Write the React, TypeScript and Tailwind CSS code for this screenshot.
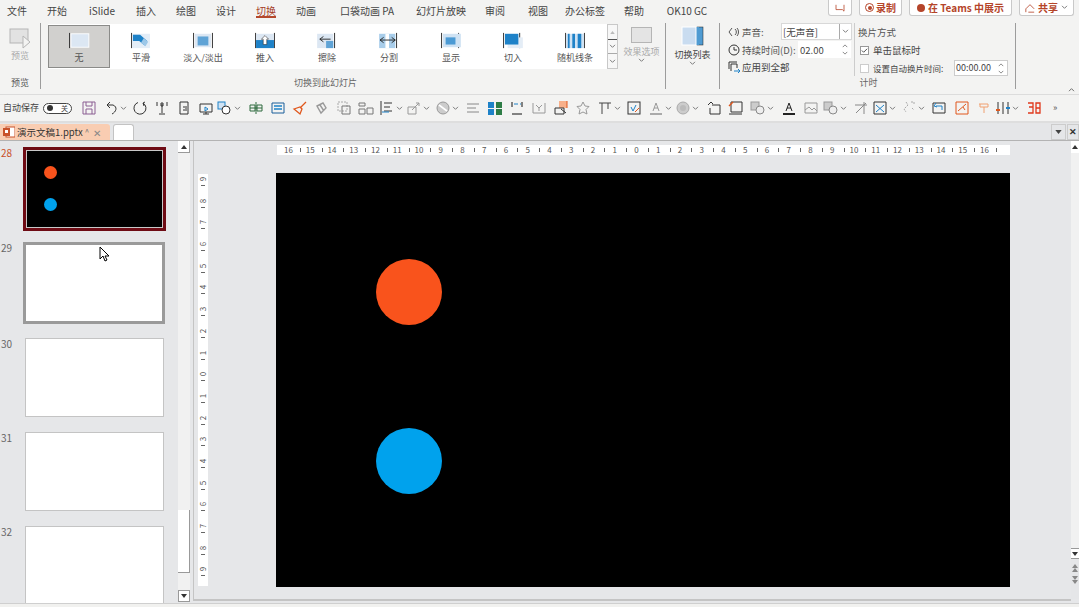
import React from 'react';

const TABS = [
  { label: '文件', cls: 'w-[34px]' },
  { label: '开始', cls: 'w-[46px]' },
  { label: 'iSlide', cls: 'w-[44px]' },
  { label: '插入', cls: 'w-[44px]' },
  { label: '绘图', cls: 'w-[36px]' },
  { label: '设计', cls: 'w-[44px]' },
  { label: '切换', cls: 'w-[36px] text-[#a33a1f]', active: true },
  { label: '动画', cls: 'w-[44px]' },
  { label: '口袋动画 PA', cls: 'w-[78px]' },
  { label: '幻灯片放映', cls: 'w-[70px]' },
  { label: '审阅', cls: 'w-[38px]' },
  { label: '视图', cls: 'w-[48px]' },
  { label: '办公标签', cls: 'w-[46px]' },
  { label: '帮助', cls: 'w-[52px]' },
  { label: 'OK10 GC', cls: 'w-[54px]' },
];

const Bar = ({ x }: { x: number }) => <rect x={x} y="1" width="1" height="17" fill="#222" />;

const GALLERY: { label: string; icon: React.ReactNode }[] = [
  { label: '无', icon: <><Bar x={1} /><rect x="3" y="2" width="20" height="15" fill="#dce7f3" stroke="#fff" /></> },
  { label: '平滑', icon: <><Bar x={1} /><rect x="2" y="2" width="20" height="16" fill="#e3edf7" /><path d="M3 3h8l8 7-3 5-6-5H3z" fill="#1e82c8" /><path d="M15 7l5 4-3 5-5-4z" fill="#9cc7e8" /></> },
  { label: '淡入/淡出', icon: <><Bar x={1} /><Bar x={22} /><rect x="3" y="2" width="18" height="15" fill="#dce7f3" /><rect x="6" y="5" width="12" height="10" fill="#5fa3d6" /></> },
  { label: '推入', icon: <><Bar x={1} /><Bar x={22} /><rect x="2" y="2" width="20" height="7" fill="#dce7f3" /><rect x="2" y="9" width="20" height="9" fill="#1e82c8" /><path d="M12 4l4 4h-2v6h-4V8H8z" fill="#fff" stroke="#222" strokeWidth=".6" /></> },
  { label: '擦除', icon: <><Bar x={20} /><rect x="1" y="2" width="18" height="16" fill="#dce7f3" /><rect x="11" y="10" width="8" height="8" fill="#5fa3d6" /><path d="M4 8h12M4 8l4-3M4 8l4 3" stroke="#222" fill="none" /></> },
  { label: '分割', icon: <><Bar x={20} /><rect x="1" y="2" width="18" height="16" fill="#a8cdea" /><rect x="8" y="2" width="4" height="16" fill="#fff" /><path d="M2 9h17M2 9l4-3M2 9l4 3M19 9l-4-3M19 9l-4 3" stroke="#222" fill="none" /></> },
  { label: '显示', icon: <><Bar x={1} /><Bar x={20} /><rect x="3" y="2" width="20" height="15" fill="#cfe2f3" /><rect x="6" y="6" width="11" height="8" fill="#4b9ad4" /></> },
  { label: '切入', icon: <><Bar x={1} /><Bar x={19} /><rect x="6" y="6" width="17" height="12" fill="#e4edf6" /><rect x="3" y="2" width="15" height="12" fill="#1e82c8" /></> },
  { label: '随机线条', icon: <><Bar x={1} /><Bar x={22} /><rect x="2" y="2" width="20" height="16" fill="#cfe2f3" /><rect x="4" y="2" width="2" height="16" fill="#1e82c8" /><rect x="9" y="2" width="3" height="16" fill="#1e82c8" /><rect x="15" y="2" width="4" height="16" fill="#1e82c8" /></> },
];

const S = ({ children }: { children: React.ReactNode }) => (
  <svg viewBox="0 0 16 16" className="w-[16px] h-[16px]" fill="none" stroke="#333" strokeWidth="1">{children}</svg>
);

const QAT: { cls: string; chev?: boolean; icon: React.ReactNode }[] = [
  { cls: 'w-[22px]', icon: <path d="M2 2h12v12H2zM5 2v4h6V2M5 14V9h6v5" stroke="#8b5f93" /> },
  { cls: 'w-[29px]', chev: true, icon: <path d="M4 5h6c5 2 3 7-1 9M4 5l3-3M4 5l3 3" /> },
  { cls: 'w-[22px]', icon: <path d="M11 3a6 6 0 1 1-5-.5M11 3l2-1M11 3l1 3" /> },
  { cls: 'w-[22px]', icon: <path d="M3 2v4M13 2v4M8 4v9M5 14h6M7 3h2v3H7z" /> },
  { cls: 'w-[22px]', icon: <path d="M4 2h8v12H4zM7 7h2M7 10h2M10 6v5" /> },
  { cls: 'w-[19px]', icon: <><path d="M2 4h12v8H2zM8 12v2M5 14h6" /><path d="M7 7l3 2-3 2z" stroke="#1e82c8" /></> },
  { cls: 'w-[31px]', chev: true, icon: <><rect x="1" y="2" width="7" height="7" fill="#cfe2f3" stroke="#1e82c8" /><circle cx="9" cy="10" r="4" fill="#fff" /></> },
  { cls: 'w-[22px]', icon: <path d="M2 5h5v6H2zM9 5h5v6H9zM8 2v12M2 8h12" stroke="#2e6b3e" /> },
  { cls: 'w-[22px]', icon: <><path d="M2 3h12v10H2z" stroke="#1a5e9a" /><path d="M4 6h8M4 9h8" stroke="#1e82c8" strokeWidth="1.4" /></> },
  { cls: 'w-[22px]', icon: <><path d="M9 7l5-5M2 9l6-2 2 2-2 5z" stroke="#e0571c" strokeWidth="1.3" /></> },
  { cls: 'w-[22px]', icon: <path d="M3 6l6-3 3 5-5 5zM6 5l4 6" stroke="#999" strokeWidth="1.4" /> },
  { cls: 'w-[22px]', icon: <><path d="M2 2h9v9H2z" stroke="#aaa" strokeDasharray="2 1" /><path d="M6 6h8v8H6z" stroke="#777" /></> },
  { cls: 'w-[21px]', icon: <path d="M1 3h6v3H1zM1 9h6v5H1zM9 8h6v6H9z" stroke="#777" /> },
  { cls: 'w-[27px]', chev: true, icon: <><path d="M2 1v14M5 3h8M5 7h6M5 11h8" /><path d="M3 12h7" stroke="#1e82c8" /></> },
  { cls: 'w-[29px]', chev: true, icon: <path d="M2 7h8v7H2zM6 10l7-7M10 3h3v3" stroke="#999" /> },
  { cls: 'w-[30px]', chev: true, icon: <><circle cx="8" cy="8" r="6" fill="#ccc" stroke="#999" /><path d="M4 5l8 6" stroke="#fff" strokeWidth="1.6" /></> },
  { cls: 'w-[22px]', icon: <path d="M2 4h12M2 8h9M2 12h12" stroke="#888" /> },
  { cls: 'w-[22px]', icon: <><rect x="1" y="2" width="6" height="6" fill="#1e82c8" stroke="none" /><rect x="9" y="2" width="6" height="6" fill="#2e7d46" stroke="none" /><rect x="1" y="9" width="6" height="6" fill="#1e82c8" stroke="none" /><rect x="9" y="9" width="6" height="6" fill="#2e7d46" stroke="none" /></> },
  { cls: 'w-[22px]', icon: <><path d="M3 2v5M13 2v5M3 14h10" stroke="#111" /><path d="M5 4h4M11 4h1" stroke="#1e82c8" /></> },
  { cls: 'w-[22px]', icon: <path d="M2 3v10h12V3M5 5l3 3 3-3M8 8v3" stroke="#999" /> },
  { cls: 'w-[22px]', icon: <><rect x="6" y="1" width="8" height="7" fill="#f8b08a" stroke="none" /><path d="M14 1v7" stroke="#e0571c" /><path d="M2 8h9v6H2zM8 9l5 4" /></> },
  { cls: 'w-[22px]', icon: <path d="M8 2l2 4 4 .5-3 3 1 4.5-4-2-4 2 1-4.5-3-3 4-.5z" stroke="#999" /> },
  { cls: 'w-[29px]', chev: true, icon: <path d="M2 3h12M5 3v11M11 3v6" stroke="#444" /> },
  { cls: 'w-[22px]', icon: <><rect x="2" y="2" width="12" height="12" /><path d="M5 7l2 4 3-6" stroke="#1e82c8" /><path d="M9 12l4-4" stroke="#e0571c" /></> },
  { cls: 'w-[27px]', chev: true, icon: <><path d="M5 11L8 3l3 8M6 8h4" stroke="#999" /><rect x="2" y="13" width="12" height="2" fill="#aaa" stroke="none" /></> },
  { cls: 'w-[31px]', chev: true, icon: <><circle cx="8" cy="8" r="6" fill="#ccc" stroke="#aaa" /><circle cx="8" cy="8" r="3" fill="#bbb" stroke="none" /></> },
  { cls: 'w-[22px]', icon: <path d="M6 5h8v9H4V8M2 5l3-3 2 2" /> },
  { cls: 'w-[22px]', icon: <><path d="M3 2h11v10H3zM1 14h13" /><path d="M1 6l4-4" stroke="#e0571c" strokeWidth="1.5" /></> },
  { cls: 'w-[31px]', chev: true, icon: <><rect x="1" y="2" width="8" height="8" fill="#ccc" stroke="#999" /><circle cx="10" cy="10" r="4" fill="#eee" stroke="#888" /></> },
  { cls: 'w-[22px]', icon: <><path d="M5 11L8 3l3 8M6 8h4" stroke="#222" /><rect x="2" y="13" width="12" height="2" fill="#222" stroke="none" /></> },
  { cls: 'w-[20px]', icon: <path d="M2 3h12v10H2zM2 10l4-3 3 3 2-2 3 3" stroke="#999" /> },
  { cls: 'w-[30px]', chev: true, icon: <><rect x="1" y="2" width="8" height="8" fill="#ccc" stroke="#999" /><circle cx="10" cy="10" r="4" fill="#eee" stroke="#888" /></> },
  { cls: 'w-[19px]', icon: <path d="M2 5h12M11 2v12M3 13L13 3" stroke="#888" /> },
  { cls: 'w-[29px]', chev: true, icon: <><path d="M2 2h12v12H2z" /><path d="M4 5l8 7M12 5l-8 7" stroke="#1e82c8" /></> },
  { cls: 'w-[30px]', chev: true, icon: <path d="M5 2l2 3-4 4 2 3M10 2h3v3M11 8l2 2" stroke="#aaa" strokeDasharray="2 1" /> },
  { cls: 'w-[23px]', icon: <><path d="M2 3h12v10H2z" /><path d="M5 3l-2 3 3 1M5 6h6v4" stroke="#1e82c8" /></> },
  { cls: 'w-[21px]', icon: <path d="M2 2h12v12H2zM4 11l8-7M9 7l2 3" stroke="#e0571c" /> },
  { cls: 'w-[20px]', icon: <path d="M4 4h9v3H9v6M5 4v3h4" stroke="#f0a070" /> },
  { cls: 'w-[31px]', chev: true, icon: <><path d="M3 2v12M8 2v12M13 2v12" /><path d="M1 10h4" stroke="#e0571c" strokeWidth="2" /><path d="M11 8h4" stroke="#1e82c8" strokeWidth="2" /></> },
  { cls: 'w-[22px]', icon: <path d="M2 3h5v4H3M7 7v6H2M10 3h4v10h-4zM10 8h4" stroke="#e0391c" strokeWidth="1.3" /> },
];

const H_RULER = [16, 15, 14, 13, 12, 11, 10, 9, 8, 7, 6, 5, 4, 3, 2, 1, 0, 1, 2, 3, 4, 5, 6, 7, 8, 9, 10, 11, 12, 13, 14, 15, 16];
const V_RULER = [9, 8, 7, 6, 5, 4, 3, 2, 1, 0, 1, 2, 3, 4, 5, 6, 7, 8, 9];

const Chev = () => (
  <svg viewBox="0 0 8 6" className="w-[7px] h-[5px] shrink-0" fill="none" stroke="#666"><path d="M1 1l3 3 3-3" /></svg>
);

const Spin = () => (
  <div className="w-[12px] h-full flex flex-col items-center justify-center gap-[3px] text-[#666]">
    <svg viewBox="0 0 8 5" className="w-[6px] h-[4px]" fill="none" stroke="currentColor"><path d="M1 4l3-3 3 3" /></svg>
    <svg viewBox="0 0 8 5" className="w-[6px] h-[4px]" fill="none" stroke="currentColor"><path d="M1 1l3 3 3-3" /></svg>
  </div>
);

const Thumb = ({ n, cls }: { n: number; cls: string }) => (
  <div className={`flex shrink-0 ${cls}`}>
    <span className="w-[25px] pl-[1px] text-[10px] leading-[12px] text-[#666]">{n}</span>
    <div className="w-[139px] h-[79px] shrink-0 bg-white border border-[#c4c4c4]" />
  </div>
);

export default function App() {
  return (
    <div className="w-[1079px] h-[607px] overflow-hidden flex flex-col bg-[#e6e7e9] text-[#444] font-['Noto_Sans_CJK_SC','Liberation_Sans',sans-serif]">
      {/* tabs */}
      <div className="h-[22px] shrink-0 flex bg-[#f3f3f2]">
        {TABS.map(t => (
          <div key={t.label} className={`h-[20px] flex items-center justify-center text-[10px] whitespace-nowrap relative ${t.cls}`}>
            {t.label}
            {t.active && <div className="absolute left-[8px] right-[8px] bottom-[2px] h-[2px] bg-[#b4482c]" />}
          </div>
        ))}
        <div className="flex-1" />
        <div className="flex gap-[7px] pr-[5px] text-[10px] font-bold text-[#b5452a]">
          <div className="w-[24px] h-[16px] bg-white border border-t-0 border-[#c9c9c9] rounded-b-[3px] flex items-center justify-center">
            <svg viewBox="0 0 12 10" className="w-[10px] h-[8px]" fill="none" stroke="#b5452a"><path d="M1 1v6h8l2 2V1" /></svg>
          </div>
          <div className="w-[43px] h-[16px] bg-white border border-t-0 border-[#c9c9c9] rounded-b-[3px] flex items-center justify-center gap-[2px]">
            <span className="w-[9px] h-[9px] rounded-full border border-[#b5452a] flex items-center justify-center"><span className="w-[4px] h-[4px] rounded-full bg-[#b5452a]" /></span>
            录制
          </div>
          <div className="w-[103px] h-[16px] bg-white border border-t-0 border-[#c9c9c9] rounded-b-[3px] flex items-center justify-center gap-[3px] whitespace-nowrap">
            <span className="w-[8px] h-[8px] rounded-full bg-[#b5452a]" />
            在 Teams 中展示
          </div>
          <div className="w-[55px] h-[16px] bg-white border border-t-0 border-[#c9c9c9] rounded-b-[3px] flex items-center justify-center gap-[3px]">
            <svg viewBox="0 0 12 12" className="w-[10px] h-[10px]" fill="none" stroke="#b5452a"><path d="M1 11V7l5-5 5 5M4 11h7" /></svg>
            共享
            <Chev />
          </div>
        </div>
      </div>

      {/* ribbon */}
      <div className="h-[72px] shrink-0 flex bg-[#f3f3f2] relative">
        <div className="w-[41px] shrink-0 flex flex-col items-center border-r border-[#9c9c9c] mb-[5px] mt-[1px]">
          <svg viewBox="0 0 24 22" className="w-[24px] h-[22px] mt-[5px]" fill="none" stroke="#b5b5b5">
            <rect x="2" y="1" width="18" height="14" fill="#e2e2e2" />
            <path d="M15 8l7 6-7 6z" fill="#f3f3f2" />
          </svg>
          <span className="text-[9px] leading-[10px] mt-[1px] text-[#aaa]">预览</span>
          <span className="mt-auto text-[9px] leading-[12px] text-[#555]">预览</span>
        </div>

        <div className="w-[625px] shrink-0 pl-[7px] flex flex-col border-r border-[#9c9c9c] mb-[5px] mt-[1px]">
          <div className="flex h-[45px] mt-[1px] shrink-0">
            <div className="w-[559px] flex bg-white">
              {GALLERY.map((g, i) => (
                <div key={g.label} className={`w-[62px] h-[43px] mt-[1px] flex flex-col items-center justify-start pt-[6px] gap-[4px] border ${i === 0 ? 'bg-[#d1d0ce] border-[#8b8b89]' : 'border-transparent'}`}>
                  <svg viewBox="0 0 24 19" className="w-[22px] h-[17px]">{g.icon}</svg>
                  <span className="text-[9px] leading-[10px] text-[#555] whitespace-nowrap">{g.label}</span>
                </div>
              ))}
            </div>
            <div className="w-[11px] flex flex-col border border-[#c8c8c8] bg-[#f7f7f7] text-[#444]">
              <div className="h-[15px] flex items-center justify-center border-b border-[#555]"><svg viewBox="0 0 6 4" className="w-[5px] h-[3px]" fill="#bbb"><path d="M3 0l3 4H0z" /></svg></div>
              <div className="h-[14px] flex items-center justify-center border-b border-[#aaa]"><Chev /></div>
              <div className="flex-1 flex items-center justify-center"><Chev /></div>
            </div>
            <div className="flex-1 flex flex-col items-center pt-[3px]">
              <div className="w-[21px] h-[16px] bg-[#e4e4e4] border border-[#b5b5b5]" />
              <span className="text-[9px] leading-[12px] mt-[3px] text-[#aaa] whitespace-nowrap">效果选项</span>
              <Chev />
            </div>
          </div>
          <div className="flex-1 flex items-end justify-center pr-[62px]">
            <span className="text-[9px] leading-[12px] text-[#666]">切换到此幻灯片</span>
          </div>
        </div>

        <div className="w-[54px] shrink-0 flex flex-col items-center border-r border-[#9c9c9c] mb-[5px] mt-[1px]">
          <svg viewBox="0 0 24 20" className="w-[24px] h-[20px] mt-[3px]">
            <rect x="16" y="1" width="6" height="18" fill="#4f9bd2" stroke="#222" strokeWidth=".5" />
            <rect x="10" y="1" width="8" height="18" fill="#4f9bd2" />
            <rect x="1" y="1" width="14" height="18" fill="#c9dcf0" stroke="#fff" />
          </svg>
          <span className="text-[9px] leading-[12px] mt-[3px] text-[#444] whitespace-nowrap">切换列表</span>
          <Chev />
        </div>

        <div className="w-[296px] shrink-0 flex flex-col border-r border-[#9c9c9c] mb-[5px] mt-[1px] pl-[8px] text-[9.5px] leading-[14px]">
          <div className="flex flex-1 min-h-0">
            <div className="w-[127px] flex flex-col border-r border-[#ccc] mb-[1px]">
              <div className="flex items-center h-[18px] gap-[2px]">
                <svg viewBox="0 0 12 12" className="w-[12px] h-[12px]" fill="none" stroke="#555"><path d="M4 2L1 6l3 4M7 3a4 4 0 0 1 0 6M9 2a6 6 0 0 1 0 8" /></svg>
                <span className="w-[37px] text-[#555]">声音:</span>
                <div className="w-[71px] h-[17px] bg-white border border-[#d8d8d8] flex items-center justify-between pl-[1px] pr-[2px] whitespace-nowrap">
                  [无声音]
                  <span className="border-l border-[#aaa] h-full flex items-center pl-[2px]"><Chev /></span>
                </div>
              </div>
              <div className="flex items-center h-[18px] gap-[2px]">
                <svg viewBox="0 0 12 12" className="w-[12px] h-[12px] shrink-0" fill="none" stroke="#333"><circle cx="6" cy="6" r="5" /><path d="M6 3v3h3" /></svg>
                <span className="w-[54px] whitespace-nowrap text-[#555]">持续时间(D):</span>
                <div className="w-[53px] h-[17px] bg-white flex items-center justify-between pl-[2px] whitespace-nowrap">
                  02.00
                  <Spin />
                </div>
              </div>
              <div className="flex items-center h-[18px] gap-[2px]">
                <svg viewBox="0 0 12 12" className="w-[12px] h-[12px]" fill="none" stroke="#333"><path d="M1 8V1h8M3 10V3h6v4" /><path d="M6 10h6M10 8l2 2-2 2" stroke="#1e82c8" /></svg>
                <span className="whitespace-nowrap">应用到全部</span>
              </div>
            </div>
            <div className="flex-1 pl-[3px] flex flex-col">
              <div className="h-[18px] flex items-center text-[#555]">换片方式</div>
              <div className="h-[18px] flex items-center gap-[4px] pl-[2px]">
                <span className="w-[9px] h-[9px] bg-white border border-[#999] flex items-center justify-center">
                  <svg viewBox="0 0 8 8" className="w-[7px] h-[7px]" fill="none" stroke="#333"><path d="M1 4l2 2 4-4" /></svg>
                </span>
                单击鼠标时
              </div>
              <div className="h-[18px] flex items-center gap-[4px] pl-[2px] whitespace-nowrap">
                <span className="w-[9px] h-[9px] bg-white border border-[#ccc]" />
                <span className="w-[77px] text-[8.5px]">设置自动换片时间:</span>
                <div className="w-[54px] h-[16px] bg-white border border-[#ccc] flex items-center justify-between pl-[1px] text-[9px]">
                  00:00.00
                  <Spin />
                </div>
              </div>
            </div>
          </div>
          <div className="h-[12px] flex justify-center pr-[6px] text-[9px] leading-[12px] text-[#666]">计时</div>
        </div>

        <div className="flex-1 flex items-end justify-end pr-[4px] pb-[2px]">
          <svg viewBox="0 0 8 6" className="w-[7px] h-[5px]" fill="none" stroke="#555"><path d="M1 5l3-3 3 3" /></svg>
        </div>
      </div>

      {/* quick access */}
      <div className="h-[27px] shrink-0 flex items-center bg-[#f3f3f2] border-t border-[#dcdcdc]">
        <div className="w-[78px] shrink-0 flex items-center pl-[3px] gap-[4px] whitespace-nowrap">
          <span className="text-[9px] leading-[12px] text-[#444]">自动保存</span>
          <span className="w-[29px] h-[11px] rounded-full border border-[#444] bg-white flex items-center justify-between px-[3px]">
            <span className="w-[6px] h-[6px] rounded-full bg-[#333]" />
            <span className="text-[7px] leading-[8px]">关</span>
          </span>
        </div>
        {QAT.map((q, i) => (
          <div key={i} className={`shrink-0 flex items-center pl-[3px] gap-[1px] ${q.cls}`}>
            <S>{q.icon}</S>
            {q.chev && <Chev />}
          </div>
        ))}
        <div className="pl-[8px] text-[9px] text-[#555]">»</div>
      </div>

      {/* document tabs */}
      <div className="h-[20px] shrink-0 flex items-end justify-between bg-[#e5e6e8] border-t-[2px] border-b-[1px] border-t-[#dedede] border-b-[#b3b3b3]">
        <div className="flex h-[16px] gap-[3px]">
          <div className="w-[110px] h-full bg-[#f9cdb2] rounded-tr-[3px] flex items-center pl-[3px] gap-[2px] whitespace-nowrap text-[9.5px] text-[#333]">
            <svg viewBox="0 0 12 12" className="w-[12px] h-[12px] shrink-0"><rect x="3" y="1" width="9" height="10" fill="#fff" stroke="#c8522a" /><rect x="0" y="2" width="7" height="8" fill="#c8522a" /><rect x="2" y="4" width="3" height="3" fill="#fff" /></svg>
            <span>演示文稿1.pptx</span>
            <span className="text-[8px] text-[#777]">^</span>
            <span className="ml-[2px] text-[#888] text-[10px]">✕</span>
          </div>
          <div className="w-[21px] h-full bg-white border border-b-0 border-[#c3c3c3] rounded-t-[3px]" />
        </div>
        <div className="flex h-[16px] gap-[1px]">
          <div className="w-[15px] h-full border border-[#ccc] flex items-center justify-center"><svg viewBox="0 0 8 5" className="w-[7px] h-[4px]" fill="#444"><path d="M0 0h8L4 5z" /></svg></div>
          <div className="w-[12px] h-full border border-[#ccc] flex items-center justify-center text-[9px] text-[#333] font-bold">✕</div>
        </div>
      </div>

      {/* main */}
      <div className="h-[462px] shrink-0 flex overflow-hidden">
        <div className="w-[178px] shrink-0 flex flex-col overflow-hidden pt-[6px] relative">
          <div className="flex shrink-0">
            <span className="w-[23px] pl-[1px] text-[10px] leading-[12px] text-[#c9502a]">28</span>
            <div className="w-[143px] h-[84px] border-[3px] border-[#6e0b14] shrink-0">
              <div className="w-full h-full bg-black border border-[#c8c8c8] relative">
                <div className="absolute left-[17px] top-[15px] w-[13px] h-[13px] rounded-full bg-[#f9531c]" />
                <div className="absolute left-[17px] top-[47px] w-[13px] h-[13px] rounded-full bg-[#00a2ed]" />
              </div>
            </div>
          </div>
          <div className="flex shrink-0 mt-[11px]">
            <span className="w-[23px] pl-[1px] text-[10px] leading-[12px] text-[#666]">29</span>
            <div className="w-[142px] h-[82px] bg-white border-[3px] border-[#9a9a9a] shrink-0" />
          </div>
          <Thumb n={30} cls="mt-[14px]" />
          <Thumb n={31} cls="mt-[15px]" />
          <Thumb n={32} cls="mt-[15px]" />
          <svg viewBox="0 0 10 16" className="absolute left-[99px] top-[105px] w-[10px] h-[16px]">
            <path d="M1 1v12l3-3 2 5 2-1-2-4h4z" fill="#fff" stroke="#000" />
          </svg>
        </div>

        <div className="w-[12px] shrink-0 flex flex-col bg-[#f1f1f1] mr-[3px] mb-[1px]">
          <div className="h-[12px] bg-white border-r border-b border-[#999] flex items-center justify-center"><svg viewBox="0 0 6 4" className="w-[6px] h-[4px]" fill="#333"><path d="M3 0l3 4H0z" /></svg></div>
          <div className="flex-1" />
          <div className="h-[63px] bg-white border-r border-b border-[#999]" />
          <div className="h-[17px]" />
          <div className="h-[12px] bg-white border border-[#999] flex items-center justify-center"><svg viewBox="0 0 6 4" className="w-[6px] h-[4px]" fill="#333"><path d="M0 0h6L3 4z" /></svg></div>
        </div>

        <div className="flex-1 min-w-0 flex flex-col border-l border-[#c4c4c4] mb-[2px] border-b-0">
          <div className="flex-1 min-h-0 flex">
            <div className="flex-1 min-w-0 flex flex-col border-b-[2px] border-[#c4c4c4]">
              <div className="h-[10px] mt-[4px] ml-[83px] w-[733px] bg-white flex pl-[6px] shrink-0 overflow-hidden">
                {H_RULER.map((n, i) => (
                  <div key={i} className="w-[21.75px] shrink-0 h-full flex items-center justify-between text-[8px] leading-[10px] text-[#555]">
                    <span className="w-[11px] text-center">{n}</span>
                    <span className="w-[1px] h-[4px] bg-[#666] mr-[4px]" />
                  </div>
                ))}
              </div>
              <div className="flex mt-[18px] ml-[4px] flex-1 min-h-0">
                <div className="w-[10px] h-[412px] mt-[1px] bg-white shrink-0 flex flex-col">
                  {V_RULER.map((n, i) => (
                    <div key={i} className="h-[21.7px] shrink-0 flex flex-col items-center text-[8px] leading-[10px] text-[#555]">
                      <span className="-rotate-90 h-[10px]">{n}</span>
                      <span className="w-[4px] h-[1px] bg-[#666] mt-[1px]" />
                    </div>
                  ))}
                </div>
                <div className="w-[734px] h-[414px] ml-[68px] bg-black shrink-0 relative">
                  <div className="absolute left-[100px] top-[86px] w-[66px] h-[66px] rounded-full bg-[#f9531c]" />
                  <div className="absolute left-[100px] top-[255px] w-[66px] h-[66px] rounded-full bg-[#00a2ed]" />
                </div>
              </div>
            </div>
            <div className="w-[8px] shrink-0 flex flex-col bg-[#f1f1f1] mb-[2px]">
              <div className="h-[12px] bg-white flex items-center justify-center"><svg viewBox="0 0 6 4" className="w-[6px] h-[4px]" fill="#333"><path d="M3 0l3 4H0z" /></svg></div>
              <div className="h-[395px]" />
              <div className="h-[11px] bg-white border-t border-b border-[#999] flex items-center justify-center"><svg viewBox="0 0 6 4" className="w-[6px] h-[4px]" fill="#333"><path d="M0 0h6L3 4z" /></svg></div>
              <div className="flex-1 bg-[#e5e6e8] flex flex-col items-center gap-[3px] pt-[5px]">
                <svg viewBox="0 0 6 9" className="w-[6px] h-[9px]" fill="#888"><path d="M3 0l3 4H0zM3 4l3 4H0z" /></svg>
                <svg viewBox="0 0 6 9" className="w-[6px] h-[9px]" fill="#888"><path d="M0 0h6L3 4zM0 4h6L3 8z" /></svg>
              </div>
            </div>
          </div>
        </div>
      </div>

      {/* status */}
      <div className="flex-1 bg-[#f1f1ef] border-t border-[#cfcfcf]" />
    </div>
  );
}
